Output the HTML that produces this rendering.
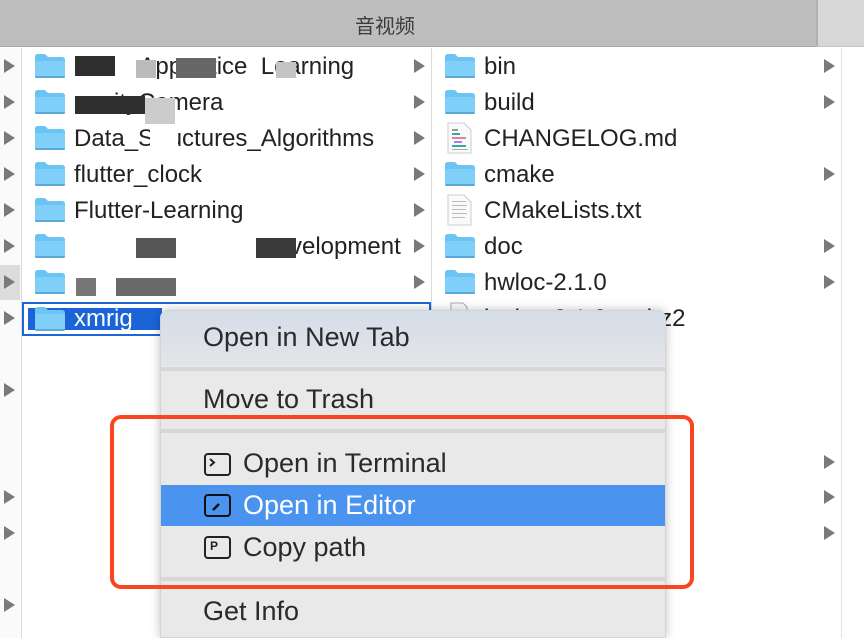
<!DOCTYPE html>
<html style="overflow:hidden;width:864px;height:638px"><head><meta charset="utf-8"><style>
*{margin:0;padding:0;box-sizing:border-box}
body{width:864px;height:638px;overflow:hidden;background:#fff;font-family:"Liberation Sans","Noto Sans CJK SC",sans-serif;position:relative;color:#222}
.a{position:absolute}
.hdr{left:0;top:0;width:864px;height:47px;background:#bdbdbd;border-bottom:1px solid #a8a8a8}
.hdr2{left:816px;top:0;width:48px;height:47px;background:#d7d7d7;border-left:2px solid #b0b0b0;border-bottom:1px solid #c4c4c4}
.title{left:355px;top:10px;font-size:20px;color:#3c3c3c}
.vl{width:1px;background:#dcdcdc}
.arr{width:0;height:0;border-left:11px solid #7a7a7a;border-top:7px solid transparent;border-bottom:7px solid transparent}
.t{font-size:24px;line-height:26px;white-space:nowrap}
.menu{left:160px;top:310px;width:506px;height:328px;background:#e9e9e9;border-radius:8px 8px 0 0;box-shadow:0 0 10px rgba(0,0,0,.25);border:1px solid #d4d4d4;overflow:hidden}
.mi{position:absolute;left:42px;font-size:27px;color:#2a2a2a;white-space:nowrap}
.sep{position:absolute;left:0;width:504px;height:4px;background:#d7d7d7}
.ico{position:absolute;left:43px;width:27px;height:23px;border:2px solid #222;border-radius:4px}
</style></head><body>
<div class="a hdr"></div><div class="a hdr2"></div>
<div class="a title">音视频</div>
<div class="a" style="left:0;top:48px;width:21px;height:590px;background:#fafafa"></div>
<div class="a vl" style="left:21px;top:48px;height:590px"></div>
<div class="a vl" style="left:431px;top:48px;height:590px"></div>
<div class="a vl" style="left:841px;top:48px;height:590px;background:#e2e2e2"></div>
<div class="a" style="left:0;top:265px;width:20px;height:35px;background:#dcdcdc"></div>

<div class="a arr" style="left:4px;top:59px"></div>
<div class="a arr" style="left:4px;top:95px"></div>
<div class="a arr" style="left:4px;top:131px"></div>
<div class="a arr" style="left:4px;top:167px"></div>
<div class="a arr" style="left:4px;top:203px"></div>
<div class="a arr" style="left:4px;top:239px"></div>
<div class="a arr" style="left:4px;top:275px"></div>
<div class="a arr" style="left:4px;top:311px"></div>
<div class="a arr" style="left:4px;top:383px"></div>
<div class="a arr" style="left:4px;top:490px"></div>
<div class="a arr" style="left:4px;top:526px"></div>
<div class="a arr" style="left:4px;top:598px"></div>

<div class="a arr" style="left:414px;top:59px"></div>
<div class="a arr" style="left:414px;top:95px"></div>
<div class="a arr" style="left:414px;top:131px"></div>
<div class="a arr" style="left:414px;top:167px"></div>
<div class="a arr" style="left:414px;top:203px"></div>
<div class="a arr" style="left:414px;top:239px"></div>
<div class="a arr" style="left:414px;top:275px"></div>
<div class="a arr" style="left:824px;top:59px"></div>
<div class="a arr" style="left:824px;top:95px"></div>
<div class="a arr" style="left:824px;top:167px"></div>
<div class="a arr" style="left:824px;top:239px"></div>
<div class="a arr" style="left:824px;top:275px"></div>
<div class="a arr" style="left:824px;top:455px"></div>
<div class="a arr" style="left:824px;top:490px"></div>
<div class="a arr" style="left:824px;top:526px"></div>

<svg class="a" style="left:0;top:0" width="864" height="638">
<defs><g id="f"><path d="M0 3 q0-3 3-3 h7 l3 3 h14 q3 0 3 3 v15 q0 3-3 3 h-24 q-3 0-3-3z" fill="#6cc4f5"/><path d="M0 7 h30 v14 q0 3-3 3 h-24 q-3 0-3-3z" fill="#80cff8"/><path d="M0 22 h30 v1 q0 1-3 1 h-24 q-3 0-3-1z" fill="#5aa9d8"/></g></defs>
<use href="#f" x="35" y="54"/><use href="#f" x="35" y="90"/><use href="#f" x="35" y="126"/><use href="#f" x="35" y="162"/><use href="#f" x="35" y="198"/><use href="#f" x="35" y="234"/><use href="#f" x="35" y="270"/>
<use href="#f" x="445" y="54"/><use href="#f" x="445" y="90"/><use href="#f" x="445" y="162"/><use href="#f" x="445" y="234"/><use href="#f" x="445" y="270"/>
<g transform="translate(448,123)"><path d="M0 0 h16 l7 7 v23 h-23z" fill="#fafafa" stroke="#ccc"/><rect x="4" y="6" width="6" height="2" fill="#999"/><rect x="4" y="10" width="8" height="2" fill="#3aa"/><rect x="4" y="14" width="14" height="2" fill="#d88"/><rect x="6" y="18" width="8" height="2" fill="#a7f"/><rect x="4" y="22" width="14" height="2" fill="#3aa"/><rect x="4" y="26" width="16" height="1" fill="#aaa"/></g>
<g transform="translate(448,195)"><path d="M0 0 h16 l7 7 v23 h-23z" fill="#fafafa" stroke="#ccc"/><g fill="#bbb"><rect x="4" y="6" width="14" height="1"/><rect x="4" y="10" width="15" height="1"/><rect x="4" y="14" width="14" height="1"/><rect x="4" y="18" width="15" height="1"/><rect x="4" y="22" width="13" height="1"/></g></g>
<path d="M451 303 h12 l4 4 v6 h-16z" fill="#fafafa" stroke="#aaa"/>
</svg>

<div class="a t" style="left:74px;top:54px">&nbsp; &nbsp; &nbsp; &nbsp; &nbsp; Appr &nbsp; tice &nbsp;Learning</div>
<div class="a" style="left:75px;top:56px;width:40px;height:20px;background:#2e2e2e"></div>
<div class="a" style="left:136px;top:60px;width:20px;height:18px;background:#bbb"></div>
<div class="a" style="left:176px;top:58px;width:40px;height:20px;background:#666"></div>
<div class="a" style="left:276px;top:62px;width:20px;height:16px;background:#c4c4c4"></div>
<div class="a t" style="left:74px;top:90px">&nbsp; &nbsp; &nbsp; ityCamera</div>
<div class="a" style="left:75px;top:96px;width:70px;height:18px;background:#2f2f2f"></div>
<div class="a" style="left:145px;top:98px;width:30px;height:26px;background:#ccc"></div>
<div class="a t" style="left:74px;top:126px">Data_Structures_Algorithms</div>
<div class="a" style="left:150px;top:126px;width:28px;height:26px;background:#fff"></div>
<div class="a t" style="left:74px;top:162px">flutter_clock</div>
<div class="a t" style="left:74px;top:198px">Flutter-Learning</div>
<div class="a t" style="left:290px;top:234px">velopment</div>
<div class="a" style="left:136px;top:238px;width:40px;height:20px;background:#555"></div>
<div class="a" style="left:256px;top:238px;width:40px;height:20px;background:#3a3a3a"></div>
<div class="a" style="left:76px;top:278px;width:20px;height:18px;background:#777"></div>
<div class="a" style="left:116px;top:278px;width:60px;height:18px;background:#6a6a6a"></div>

<div class="a" style="left:22px;top:302px;width:409px;height:34px;border:2px solid #1c66d6;background:#fff"></div>
<div class="a" style="left:28px;top:308px;width:134px;height:22px;background:#1a64d8"></div>
<svg class="a" style="left:35px;top:307px" width="30" height="24"><use href="#f"/></svg>
<div class="a t" style="left:74px;top:306px;color:#fff">xmrig</div>

<div class="a t" style="left:484px;top:54px">bin</div>
<div class="a t" style="left:484px;top:90px">build</div>
<div class="a t" style="left:484px;top:126px">CHANGELOG.md</div>
<div class="a t" style="left:484px;top:162px">cmake</div>
<div class="a t" style="left:484px;top:198px">CMakeLists.txt</div>
<div class="a t" style="left:484px;top:234px">doc</div>
<div class="a t" style="left:484px;top:270px">hwloc-2.1.0</div>
<div class="a t" style="left:484px;top:306px">hwloc-2.1.0.tar.bz2</div>

<div class="a menu">
<div class="a" style="left:0;top:0;width:504px;height:55px;background:linear-gradient(#d5dde8,#e3e5e8)"></div>
<div class="mi" style="top:11px">Open in New Tab</div>
<div class="sep" style="top:56px"></div>
<div class="mi" style="top:73px">Move to Trash</div>
<div class="sep" style="top:118px"></div>
<div class="ico" style="top:142px"></div>
<svg class="a" style="left:45px;top:144px" width="24" height="20"><path d="M4 4 L8 7.5 L4 11" stroke="#222" stroke-width="2" fill="none"/></svg>
<div class="mi" style="left:82px;top:137px">Open in Terminal</div>
<div class="a" style="left:0;top:174px;width:504px;height:41px;background:#4a94f0"></div>
<div class="ico" style="top:183px;border-color:#111"></div>
<svg class="a" style="left:47px;top:187px" width="20" height="16"><path d="M5 12 L11 6" stroke="#111" stroke-width="2.5"/></svg>
<div class="mi" style="left:82px;top:179px;color:#fff">Open in Editor</div>
<div class="ico" style="top:225px"></div>
<div class="a" style="left:49px;top:228px;font-size:12px;font-weight:bold;color:#222">P</div>
<div class="mi" style="left:82px;top:221px">Copy path</div>
<div class="sep" style="top:266px"></div>
<div class="mi" style="top:285px">Get Info</div>
</div>

<div class="a" style="left:110px;top:415px;width:584px;height:174px;border:4px solid #fb4520;border-radius:11px"></div>
</body></html>
